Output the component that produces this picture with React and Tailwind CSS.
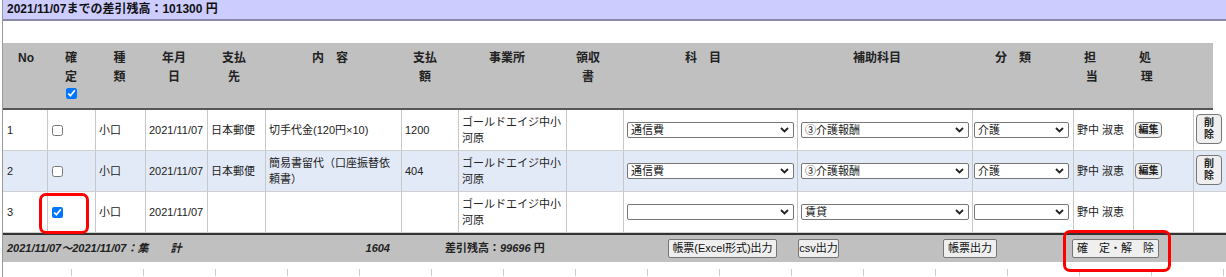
import React from 'react';

const FONT = { fontFamily: '"Liberation Sans", "Noto Sans CJK JP", sans-serif' };

const ROWS = [
  { no: '1', checked: false, kind: '小口', date: '2021/11/07', payee: '日本郵便', desc: '切手代金(120円×10)', amount: '1200', office: 'ゴールドエイジ中小河原', subject: '通信費', sub: '③介護報酬', cat: '介護', person: '野中 淑恵', actions: true, bg: 'bg-white' },
  { no: '2', checked: false, kind: '小口', date: '2021/11/07', payee: '日本郵便', desc: '簡易書留代（口座振替依頼書）', amount: '404', office: 'ゴールドエイジ中小河原', subject: '通信費', sub: '③介護報酬', cat: '介護', person: '野中 淑恵', actions: true, bg: 'bg-[#e3eaf7]' },
  { no: '3', checked: true, kind: '小口', date: '2021/11/07', payee: '', desc: '', amount: '', office: 'ゴールドエイジ中小河原', subject: '', sub: '賃貸', cat: '', person: '野中 淑恵', actions: false, bg: 'bg-white' },
];

function Chevron() {
  return (
    <svg width="9" height="6" viewBox="0 0 9 6" className="shrink-0">
      <path d="M1 1 L4.5 4.5 L8 1" fill="none" stroke="#222" strokeWidth="1.8" />
    </svg>
  );
}

function FakeSelect({ value, className }) {
  return (
    <div className={`h-[16px] bg-white border border-[#767676] rounded-[2px] flex items-center justify-between pl-[3px] pr-[4px] text-[11px] leading-none ${className}`}>
      <span>{value}</span>
      <Chevron />
    </div>
  );
}

function HeadCell({ lines, w, box }) {
  return (
    <div className={`${w} flex flex-col items-center pt-[6px] leading-[19px]`}>
      {lines.map((l, i) => (
        <span key={i} className="whitespace-pre">{l}</span>
      ))}
      {box && <input type="checkbox" defaultChecked className="w-[11px] h-[11px] m-0 mt-[1px]" />}
    </div>
  );
}

function Btn({ children, className }) {
  return (
    <button className={`h-[19px] bg-[#efefef] border border-[#767676] rounded-[2px] text-[11px] font-normal leading-none whitespace-nowrap text-[#111] flex items-center justify-center shrink-0 ${className}`}>
      {children}
    </button>
  );
}

export default function App() {
  const cell = 'border-l border-[#c8c8c8] flex items-center px-[3px]';
  return (
    <div className="relative w-[1226px] h-[277px] overflow-hidden bg-white text-[#222]" style={FONT}>
      <div className="ml-[2px] border-l border-[#9a9a9a] h-full flex flex-col">
        {/* balance bar */}
        <div className="h-[21px] bg-[#ccccff] border-b-2 border-[#8a8aa8] pl-[4px] text-[12px] font-bold leading-[19px] text-[#111]">
          2021/11/07までの差引残高：101300 円
        </div>

        {/* header */}
        <div className="mt-[22px] w-[1210px] h-[67px] bg-[#c0c0c0] border-b-2 border-[#555] flex text-[12px] font-bold text-[#222]">
          <HeadCell w="w-[46px]" lines={['No']} />
          <HeadCell w="w-[44px]" lines={['確', '定']} box />
          <HeadCell w="w-[53px]" lines={['種', '類']} />
          <HeadCell w="w-[56px]" lines={['年月', '日']} />
          <HeadCell w="w-[64px]" lines={['支払', '先']} />
          <HeadCell w="w-[128px]" lines={['内　容']} />
          <HeadCell w="w-[62px]" lines={['支払', '額']} />
          <HeadCell w="w-[102px]" lines={['事業所']} />
          <HeadCell w="w-[60px]" lines={['領収', '書']} />
          <HeadCell w="w-[170px]" lines={['科　目']} />
          <HeadCell w="w-[178px]" lines={['補助科目']} />
          <HeadCell w="w-[94px]" lines={['分　類']} />
          <HeadCell w="w-[60px]" lines={['担', ' 当']} />
          <HeadCell w="w-[50px]" lines={['処', ' 理']} />
        </div>

        {/* rows */}
        {ROWS.map((r) => (
          <div
            key={r.no}
            className={`grid grid-cols-[44px_48px_50px_62px_58px_136px_57px_108px_57px_174px_175px_101px_60px_60px_33px] h-[41px] border-b border-[#d0d0d0] text-[11px] leading-[16px] ${r.bg}`}
          >
            <div className="flex items-center pl-[4px]">{r.no}</div>
            <div className={cell}>
              <input type="checkbox" defaultChecked={r.checked} className="w-[11px] h-[11px] m-0 ml-[1px]" />
            </div>
            <div className={cell}>{r.kind}</div>
            <div className={cell}>{r.date}</div>
            <div className={cell}>{r.payee}</div>
            <div className={cell}>{r.desc}</div>
            <div className={cell}>{r.amount}</div>
            <div className={cell}>{r.office}</div>
            <div className={cell}></div>
            <div className={cell}>
              <FakeSelect value={r.subject} className="w-[167px]" />
            </div>
            <div className={cell}>
              <FakeSelect value={r.sub} className="w-[168px]" />
            </div>
            <div className="border-l border-[#c8c8c8] flex items-center pl-[1px]">
              <FakeSelect value={r.cat} className="w-[95px]" />
            </div>
            <div className={cell}>{r.person}</div>
            <div className="border-l border-[#c8c8c8] flex items-center pl-[1px]">
              {r.actions && (
                <button className="w-[27px] h-[16px] bg-[#efefef] border border-[#767676] rounded-[4px] text-[10px] font-bold leading-none flex items-center justify-center">
                  編集
                </button>
              )}
            </div>
            <div className="border-l border-[#c8c8c8] flex items-start pt-[4px] pl-[2px]">
              {r.actions && (
                <button className="w-[26px] h-[30px] bg-[#efefef] border border-[#767676] rounded-[4px] text-[10px] font-bold leading-[12px] flex flex-col items-center justify-center">
                  <span>削</span>
                  <span>除</span>
                </button>
              )}
            </div>
          </div>
        ))}

        {/* footer */}
        <div className="h-[29px] bg-[#c0c0c0] border-t-2 border-[#333] flex items-center text-[11px] font-bold text-[#222]">
          <div className="w-[388px] shrink-0 flex justify-between pl-[4px] pr-[1px]">
            <span className="italic">2021/11/07～2021/11/07：集　　計</span>
            <span className="italic">1604</span>
          </div>
          <div className="w-[277px] shrink-0 pl-[54px]">
            差引残高：<span className="italic">99696</span> 円
          </div>
          <Btn className="w-[109px]">帳票(Excel形式)出力</Btn>
          <Btn className="w-[41px] ml-[21px]">csv出力</Btn>
          <Btn className="w-[54px] ml-[104px]">帳票出力</Btn>
          <Btn className="w-[87px] ml-[75px]">確　定・解　除</Btn>
        </div>

        {/* tick marks */}
        <div className="mt-[7px] flex h-[7px]">
          <div className="w-[69px] shrink-0 border-r border-[#cccccc]" />
          {Array.from({ length: 16 }).map((_, i) => (
            <div key={i} className="w-[72px] shrink-0 border-r border-[#cccccc]" />
          ))}
        </div>
      </div>

      {/* red annotation boxes */}
      <div className="absolute left-[39px] top-[193px] w-[50px] h-[41px] border-[3px] border-[#ff0000] rounded-[7px]" />
      <div className="absolute left-[1063px] top-[230px] w-[108px] h-[42px] border-[3px] border-[#ff0000] rounded-[7px]" />
    </div>
  );
}
